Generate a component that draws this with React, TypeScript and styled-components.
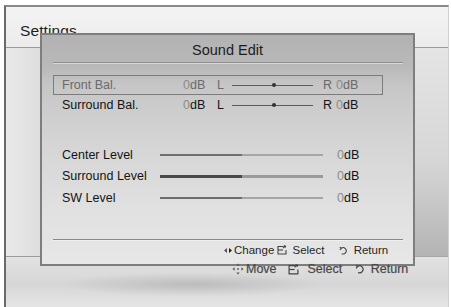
import styled, { createGlobalStyle } from 'styled-components';

const GlobalStyle = createGlobalStyle`
  html, body {
    margin: 0;
    padding: 0;
    background: #ffffff;
    overflow: hidden;
  }
  * {
    box-sizing: border-box;
  }
`;

const Page = styled.div`
  width: 451px;
  height: 307px;
  padding: 5px 0 0 4px;
  font-family: 'Liberation Sans', Arial, sans-serif;
`;

const Screen = styled.div`
  position: relative;
  width: 445px;
  height: 302px;
  border-left: 2px solid #6a6a6a;
  border-top: 2px solid #8a8a8a;
  border-right: 1px solid #d0d0d0;
  display: grid;
  grid-template-columns: 34px 1fr 33px;
  grid-template-rows: 41px 209px 1fr;
  background: #e8e8e8;
`;

const TopBand = styled.div`
  grid-column: 1 / -1;
  background: linear-gradient(#f3f3f3, #ececec);
  border-bottom: 1.5px solid #9a9a9a;
  padding: 15px 0 0 14px;
`;

const ScreenTitle = styled.div`
  font-size: 15.5px;
  color: #1e1e1e;
  letter-spacing: 0.1px;
`;

const SidePanel = styled.div<{ $side: 'left' | 'right' }>`
  background: ${(p) =>
    p.$side === 'left'
      ? 'linear-gradient(90deg, #e9e9e9, #dedede)'
      : 'linear-gradient(#e4e4e4 0%, #d6d6d6 55%, #b4b4b4 100%)'};
  border-bottom: 1.5px solid ${(p) => (p.$side === 'left' ? '#9a9a9a' : '#a8a8a8')};
`;

const Middle = styled.div``;

const BottomBand = styled.div`
  grid-column: 1 / -1;
  background:
    radial-gradient(ellipse 130px 12px at 42% 55%, rgba(150, 150, 150, 0.4), rgba(150, 150, 150, 0)),
    linear-gradient(#e2e2e2 0%, #d6d6d6 55%, #e6e6e6 100%);
`;

const Dialog = styled.div`
  position: absolute;
  left: 34px;
  top: 26px;
  width: 375px;
  height: 233px;
  border: 2px solid #7e7e7e;
  background: linear-gradient(#b2b2b2 0%, #b9b9b9 14%, #c6c6c6 22%, #d4d4d4 45%, #e0e0e0 75%, #e7e7e7 100%);
  display: flex;
  flex-direction: column;
  z-index: 1;
`;

const DialogTitle = styled.div`
  height: 27px;
  display: flex;
  align-items: center;
  justify-content: center;
  padding-top: 3px;
  font-size: 14.5px;
  color: #1c1c1c;
`;

const Divider = styled.div`
  height: 2px;
  margin: 0 10px 0 11px;
  background: #8e8e8e;
  border-bottom: 1px solid #d8d8d8;
`;

const Rows = styled.div`
  margin: 11px 0 0 11px;
  width: 330px;
  display: flex;
  flex-direction: column;
`;

const Row = styled.div<{ $selected?: boolean; $height: number; $gapTop?: number }>`
  height: ${(p) => p.$height}px;
  margin-top: ${(p) => p.$gapTop ?? 0}px;
  display: flex;
  align-items: center;
  padding-left: 8px;
  border: 1.5px solid ${(p) => (p.$selected ? '#7c7c7c' : 'transparent')};
  color: ${(p) => (p.$selected ? '#6a6a6a' : '#141414')};
  font-size: 12.5px;
`;

const Label = styled.span<{ $width: number }>`
  width: ${(p) => p.$width}px;
  flex: none;
  white-space: nowrap;
`;

const Value = styled.span<{ $width?: number }>`
  width: ${(p) => (p.$width ? `${p.$width}px` : 'auto')};
  flex: none;
  white-space: nowrap;
`;

const Zero = styled.span`
  color: #8c8c8c;
`;

const BalanceTrack = styled.div`
  position: relative;
  width: 81px;
  height: 1px;
  background: #5c5c5c;
  margin-right: 10px;
  flex: none;
`;

const Knob = styled.div`
  position: absolute;
  left: 40px;
  top: -1.5px;
  width: 4px;
  height: 4px;
  border-radius: 50%;
  background: #333;
`;

const LevelTrack = styled.div<{ $strong?: boolean }>`
  width: 163px;
  height: ${(p) => (p.$strong ? 3 : 2)}px;
  margin-right: 14px;
  flex: none;
  display: flex;
`;

const LevelFill = styled.div<{ $strong?: boolean }>`
  flex: 1;
  background: ${(p) => (p.$strong ? '#4a4a4a' : '#6f6f6f')};
`;

const LevelRest = styled.div<{ $strong?: boolean }>`
  flex: 1;
  background: ${(p) => (p.$strong ? '#9a9a9a' : '#a6a6a6')};
`;

const FooterLine = styled.div`
  height: 2px;
  margin: 30px 10px 0 11px;
  background: #8a8a8a;
  border-bottom: 1px solid #f0f0f0;
`;

const Footer = styled.div`
  display: flex;
  align-items: center;
  height: 19px;
  padding-left: 182px;
  font-size: 11.5px;
  color: #262626;
`;

const Hint = styled.span<{ $gap?: number }>`
  display: inline-flex;
  align-items: center;
  gap: 2px;
  margin-right: ${(p) => p.$gap ?? 0}px;
  white-space: nowrap;
`;

const HintBar = styled.div`
  position: absolute;
  left: 226px;
  top: 255px;
  display: flex;
  align-items: center;
  font-size: 12.5px;
  color: #4a4a4a;
  z-index: 2;
  text-shadow: 0 0 1px rgba(90, 90, 90, 0.5);
`;

function ArrowsIcon() {
  return (
    <svg width="8" height="7" viewBox="0 0 8 7">
      <path d="M0 3.5 L3 1 L3 6 Z" fill="#555" />
      <path d="M8 3.5 L5 1 L5 6 Z" fill="#222" />
    </svg>
  );
}

function SelectIcon({ size = 10 }: { size?: number }) {
  return (
    <svg width={size} height={size} viewBox="0 0 10 10" fill="none" stroke="#444" strokeWidth="1.1">
      <path d="M6.5 1.5 H1 V9 H9 V5" />
      <path d="M1 5 H6" />
      <path d="M6 3 L8.5 0.8 M8.5 0.8 H6.8 M8.5 0.8 V2.5" />
    </svg>
  );
}

function ReturnIcon({ size = 9 }: { size?: number }) {
  return (
    <svg width={size} height={size} viewBox="0 0 10 10" fill="none" stroke="#444" strokeWidth="1.2">
      <path d="M2.5 2.5 A3.5 3.5 0 1 1 3 8.5" />
      <path d="M0.8 1.2 L2.6 2.6 L1 4.3" />
    </svg>
  );
}

function MoveIcon() {
  return (
    <svg width="12" height="12" viewBox="0 0 12 12" fill="#555">
      <path d="M6 0.5 L4.3 2.6 H7.7 Z" />
      <path d="M6 11.5 L4.3 9.4 H7.7 Z" />
      <path d="M0.5 6 L2.6 4.3 V7.7 Z" />
      <path d="M11.5 6 L9.4 4.3 V7.7 Z" />
      <circle cx="6" cy="6" r="0.9" />
    </svg>
  );
}

const dB = () => (
  <>
    <Zero>0</Zero>dB
  </>
);

const balanceRows = [
  { label: 'Front Bal.', selected: true },
  { label: 'Surround Bal.', selected: false },
];

const levelRows = [
  { label: 'Center Level', strong: false },
  { label: 'Surround Level', strong: true },
  { label: 'SW Level', strong: false },
];

export default function App() {
  return (
    <>
      <GlobalStyle />
      <Page>
        <Screen>
          <TopBand>
            <ScreenTitle>Settings</ScreenTitle>
          </TopBand>
          <SidePanel $side="left" />
          <Middle />
          <SidePanel $side="right" />
          <BottomBand />

          <Dialog>
            <DialogTitle>Sound Edit</DialogTitle>
            <Divider />
            <Rows>
              {balanceRows.map((r) => (
                <Row key={r.label} $selected={r.selected} $height={20}>
                  <Label $width={121}>{r.label}</Label>
                  <Value $width={34}>{dB()}</Value>
                  <Value $width={15}>L</Value>
                  <BalanceTrack>
                    <Knob />
                  </BalanceTrack>
                  <Value $width={13}>R</Value>
                  <Value>{dB()}</Value>
                </Row>
              ))}
              {levelRows.map((r, i) => (
                <Row key={r.label} $height={21.5} $gapTop={i === 0 ? 29 : 0}>
                  <Label $width={98}>{r.label}</Label>
                  <LevelTrack $strong={r.strong}>
                    <LevelFill $strong={r.strong} />
                    <LevelRest $strong={r.strong} />
                  </LevelTrack>
                  <Value>{dB()}</Value>
                </Row>
              ))}
            </Rows>
            <FooterLine />
            <Footer>
              <Hint $gap={3}>
                <ArrowsIcon />
                Change
              </Hint>
              <Hint $gap={15}>
                <SelectIcon />
                &nbsp;Select
              </Hint>
              <Hint>
                <ReturnIcon />
                &nbsp;Return
              </Hint>
            </Footer>
          </Dialog>

          <HintBar>
            <Hint $gap={11}>
              <MoveIcon />
              Move
            </Hint>
            <Hint $gap={13}>
              <SelectIcon size={11} />
              &nbsp;&nbsp;Select
            </Hint>
            <Hint>
              <ReturnIcon size={10} />
              &nbsp;Return
            </Hint>
          </HintBar>
        </Screen>
      </Page>
    </>
  );
}
